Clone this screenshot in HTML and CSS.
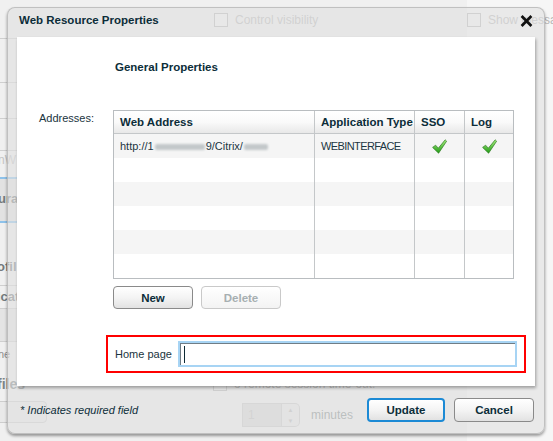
FILE: index.html
```html
<!DOCTYPE html>
<html>
<head>
<meta charset="utf-8">
<title>Web Resource Properties</title>
<link rel="stylesheet" href="styles.css">
</head>
<body>
<div class="page">
  <aside class="side">
    <div class="s-cell s-top"></div>
    <div class="s-cell s-a"></div>
    <div class="s-cell s-b"></div>
    <div class="s-cell s-c"></div>
    <div class="s-text s-light">nW</div>
    <div class="s-sel">urat</div>
    <div class="s-cell s-ofil">ofil</div>
    <div class="s-cell s-icat">icat</div>
    <div class="s-cell s-band"></div>
    <div class="s-small">ne</div>
    <div class="s-files">files</div>
    <div class="s-box"></div>
  </aside>
  <main class="main">
    <div class="g-row g-top"><span class="g-check"></span><span class="g-text">Control visibility</span></div>
    <div class="g-spacer"></div>
    <div class="g-row g-timeout"><span class="g-check"></span><span class="g-text">o remote session time-out.</span></div>
    <div class="g-row g-spin-row">
      <div class="g-spin"><span class="g-spin-val">1</span><span class="g-spin-arrows"><span>&#9650;</span><span>&#9660;</span></span></div>
      <span class="g-text g-minutes">minutes</span>
    </div>
  </main>
  <aside class="right">
    <div class="g-row g-top g-right"><span class="g-check"></span><span class="g-text">Show messages</span></div>
  </aside>
</div>

<div class="dialog">
  <div class="dlg-head">
    <div class="dlg-title">Web Resource Properties</div>
    <svg class="dlg-close" width="13" height="12" viewBox="0 0 13 12"><path d="M1.6 1 L11.4 11 M11.4 1 L1.6 11" stroke="#111" stroke-width="2.7" fill="none"/></svg>
  </div>
  <div class="panel">
    <h2 class="gp">General Properties</h2>
    <div class="addr">
      <div class="addr-label">Addresses:</div>
      <table class="grid">
        <thead>
          <tr><th class="c1">Web Address</th><th class="c2">Application Type</th><th class="c3">SSO</th><th class="c4">Log</th></tr>
        </thead>
        <tbody>
          <tr class="alt">
            <td class="c1">http://1<span class="blur b1"></span>9/Citrix/<span class="blur b2"></span></td>
            <td class="c2 apptype">WEBINTERFACE</td>
            <td class="c3 ck"><svg width="15" height="15" viewBox="0 0 15 15"><defs><linearGradient id="cg1" x1="0" y1="0" x2="0" y2="1"><stop offset="0" stop-color="#a9f07f"/><stop offset="1" stop-color="#1f9a15"/></linearGradient></defs><path d="M0.6 8.4 L3.6 6.2 L6.3 9.2 L13.2 0.8 L14.6 2.2 L6.6 14.2 Z" fill="url(#cg1)" stroke="#2c7a20" stroke-width="0.7" stroke-linejoin="round"/></svg></td>
            <td class="c4 ck"><svg width="15" height="15" viewBox="0 0 15 15"><defs><linearGradient id="cg2" x1="0" y1="0" x2="0" y2="1"><stop offset="0" stop-color="#a9f07f"/><stop offset="1" stop-color="#1f9a15"/></linearGradient></defs><path d="M0.6 8.4 L3.6 6.2 L6.3 9.2 L13.2 0.8 L14.6 2.2 L6.6 14.2 Z" fill="url(#cg2)" stroke="#2c7a20" stroke-width="0.7" stroke-linejoin="round"/></svg></td>
          </tr>
          <tr><td class="c1"></td><td class="c2"></td><td class="c3"></td><td class="c4"></td></tr>
          <tr class="alt"><td class="c1"></td><td class="c2"></td><td class="c3"></td><td class="c4"></td></tr>
          <tr><td class="c1"></td><td class="c2"></td><td class="c3"></td><td class="c4"></td></tr>
          <tr class="alt"><td class="c1"></td><td class="c2"></td><td class="c3"></td><td class="c4"></td></tr>
          <tr><td class="c1"></td><td class="c2"></td><td class="c3"></td><td class="c4"></td></tr>
        </tbody>
      </table>
    </div>
    <div class="btn-row">
      <button class="btn">New</button>
      <button class="btn btn-disabled">Delete</button>
    </div>
    <div class="home">
      <span class="home-label">Home page</span>
      <div class="field"><span class="caret"></span></div>
    </div>
  </div>
  <div class="dlg-foot">
    <span class="req">* Indicates required field</span>
    <button class="btn fbtn btn-primary">Update</button>
    <button class="btn fbtn btn-cancel">Cancel</button>
  </div>
</div>
</body>
</html>
```

FILE: styles.css
```css
body {
  margin: 0;
  background: #f0f0f0;
  font-family: "Liberation Sans", Arial, sans-serif;
  font-size: 11px;
  color: #10303c;
}

/* ---------- ghosted page behind the dialog ---------- */
.page {
  display: grid;
  grid-template-columns: 60px 407px 86px;
  width: 553px;
  height: 441px;
  overflow: hidden;
}

.side {
  display: flex;
  flex-direction: column;
  overflow: hidden;
  font-size: 13px;
  white-space: nowrap;
}
.s-cell { border-bottom: 1px solid #cfcfcf; box-sizing: border-box; }
.s-top { height: 39px; }
.s-a { height: 44px; }
.s-b { height: 36px; }
.s-c { height: 32px; }
.s-text { height: 26px; padding-top: 2px; line-height: 14px; box-sizing: border-box; }
.s-light { color: #c4c4c4; font-size: 12px; margin-left: -2px; }
.s-sel {
  height: 46px;
  box-sizing: border-box;
  border-top: 2px solid #8ec2ea;
  border-bottom: 2px solid #8ec2ea;
  background: #e2e2e2;
  line-height: 40px;
  font-weight: bold;
  color: #737a7c;
  margin-left: -2px;
}
.s-ofil {
  height: 63px;
  display: flex;
  align-items: flex-end;
  padding-bottom: 11px;
  font-weight: bold;
  color: #737a7c;
  margin-left: -3px;
}
.s-icat {
  height: 23px;
  line-height: 22px;
  font-weight: bold;
  color: #737a7c;
  margin-left: -3px;
}
.s-band { height: 33px; background: #e4e4e4; }
.s-small { height: 25px; line-height: 25px; font-size: 11px; color: #8c8c8c; margin-left: -2px; }
.s-files { height: 34px; line-height: 34px; font-weight: bold; color: #7d8486; margin-left: -3px; font-size: 14px; }
.s-box {
  height: 22px;
  width: 57px;
  margin-left: -10px;
  box-sizing: border-box;
  border: 1px solid #cdcdcd;
  border-radius: 4px;
  background: #e9e9e9;
}

.main {
  display: flex;
  flex-direction: column;
  padding: 13px 0 14px;
  box-sizing: border-box;
  height: 441px;
}
.right {
  background: #f6f6f6;
  padding-top: 13px;
  overflow: hidden;
  white-space: nowrap;
}
.g-row { display: flex; align-items: center; height: 14px; white-space: nowrap; }
.g-top { margin-left: 154px; }
.g-right { margin-left: 0; }
.g-check {
  width: 14px;
  height: 14px;
  box-sizing: border-box;
  border: 1px solid #b9b9b9;
  background: #f4f4f4;
  flex: none;
}
.g-text { margin-left: 7px; font-size: 12px; color: #b8b8b8; }
.g-spacer { flex: 1; }
.g-timeout { margin-left: 153px; }
.g-timeout .g-text { color: #8a8a8a; }
.g-spin-row { margin-top: 12px; height: 24px; margin-left: 182px; }
.g-spin { display: flex; height: 24px; }
.g-spin-val {
  width: 40px;
  box-sizing: border-box;
  border: 1px solid #c9c9c9;
  background: #d8d8d8;
  color: #bdbdbd;
  font-size: 12px;
  line-height: 22px;
  padding-left: 5px;
}
.g-spin-arrows {
  width: 18px;
  box-sizing: border-box;
  border: 1px solid #c9c9c9;
  border-left: none;
  border-radius: 0 5px 5px 0;
  display: flex;
  flex-direction: column;
  align-items: center;
  justify-content: space-around;
  font-size: 6px;
  color: #b8b8b8;
  background: #e6e6e6;
}
.g-minutes { margin-left: 11px; color: #7e8888; }

/* ---------- dialog ---------- */
.dialog {
  position: absolute;
  left: 7px;
  top: 7px;
  width: 538px;
  height: 427px;
  box-sizing: border-box;
  border: 1px solid rgba(175, 175, 175, 0.7);
  border-radius: 8px;
  background: rgba(224, 224, 224, 0.62);
  box-shadow: 0 2px 3px rgba(0, 0, 0, 0.38);
  display: flex;
  flex-direction: column;
}
.dlg-head {
  height: 29px;
  display: flex;
  align-items: flex-start;
  padding: 0 11px;
}
.dlg-title {
  line-height: 24px;
  font-size: 11.5px;
  font-weight: bold;
  color: #0c2d39;
}
.dlg-close { margin-left: auto; margin-top: 7px; margin-right: 0; }

.panel {
  margin-left: 9px;
  width: 518px;
  height: 349px;
  box-sizing: border-box;
  background: #fff;
  box-shadow: 1px 2px 3px rgba(0, 0, 0, 0.32);
  padding-top: 23px;
}
.gp {
  margin: 0 0 0 98px;
  font-size: 11.5px;
  line-height: 14px;
  font-weight: bold;
  color: #0c2d39;
}
.addr { display: flex; margin-top: 36px; }
.addr-label {
  width: 74px;
  padding-left: 22px;
  padding-top: 1px;
  line-height: 14px;
  color: #1a3440;
}

.grid {
  width: 401px;
  table-layout: fixed;
  border-collapse: separate;
  border-spacing: 0;
  border: 1px solid #b9bdc0;
}
.grid th, .grid td {
  box-sizing: border-box;
  padding: 0 6px;
  text-align: left;
  white-space: nowrap;
  overflow: hidden;
}
.grid th {
  height: 23px;
  border-bottom: 1px solid #c4c7c9;
  background: linear-gradient(#ffffff, #fafafa 50%, #e8e8e8);
  font-size: 11.5px;
  font-weight: bold;
  color: #0c2d39;
}
.grid td { height: 24px; color: #1c3642; }
.grid tr.alt td { background: #f5f5f5; }
.grid .c1 { width: 200px; }
.grid .c2 { width: 100px; border-left: 1px solid #c4c7c9; }
.grid .c3 { width: 50px; border-left: 1px solid #c4c7c9; }
.grid .c4 { width: 49px; border-left: 1px solid #c4c7c9; }
.grid td.ck { text-align: center; padding: 0; }
.grid td.ck svg { display: inline-block; vertical-align: middle; }
.apptype { letter-spacing: -0.6px; }
.blur {
  display: inline-block;
  height: 6px;
  vertical-align: middle;
  background: #c3c8ca;
  filter: blur(1.3px);
  border-radius: 2px;
}
.b1 { width: 50px; margin: 0 1px; }
.b2 { width: 24px; margin-left: 1px; }

.btn-row { display: flex; gap: 8px; margin: 7px 0 0 96px; }
.btn {
  width: 80px;
  height: 23px;
  box-sizing: border-box;
  border: 1px solid #8a8a8a;
  border-radius: 4px;
  background: linear-gradient(#ffffff, #f4f4f4 50%, #e2e2e2);
  font-family: "Liberation Sans", Arial, sans-serif;
  font-size: 11.5px;
  font-weight: bold;
  color: #0c2d39;
  padding: 0;
}
.btn-disabled {
  border-color: #c9c9c9;
  color: #a7afb1;
  background: linear-gradient(#ffffff, #f3f3f3);
}

.home {
  display: flex;
  align-items: center;
  margin: 26px 0 0 89px;
  width: 420px;
  height: 38px;
  box-sizing: border-box;
  border: 2px solid #ff0000;
  padding: 0 7px;
}
.home-label { width: 63px; flex: none; line-height: 14px; color: #1a3440; }
.field {
  flex: 1;
  height: 26px;
  box-sizing: border-box;
  border: 2px solid #a7d4f4;
  box-shadow: inset 1px 1px 0 #6f7d86;
  background: #fff;
  display: flex;
  align-items: center;
  padding-left: 4px;
}
.caret { width: 1px; height: 17px; background: #0e2a35; }

.dlg-foot {
  flex: 1;
  display: flex;
  align-items: center;
  padding: 1px 10px 0 12px;
}
.req { font-style: italic; color: #0c2d39; margin-right: auto; }
.fbtn { height: 24px; }
.btn-primary { width: 78px; border: 2px solid #1c8ad5; margin-right: 9px; }
.btn-cancel { width: 80px; }
```
